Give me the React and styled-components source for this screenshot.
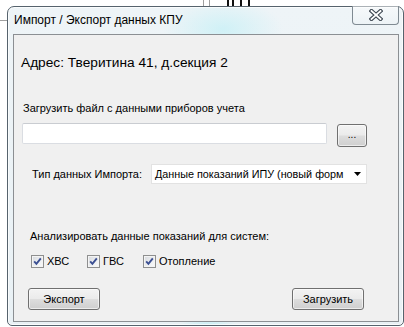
import React from "react";
import styled, { createGlobalStyle } from "styled-components";

const GlobalStyle = createGlobalStyle`
  html, body {
    margin: 0;
    padding: 0;
    background: #ffffff;
    overflow: hidden;
  }
`;

const Desktop = styled.div`
  position: relative;
  width: 404px;
  height: 327px;
  padding: 6px 0 0 7px;
  box-sizing: border-box;
  font-family: "Liberation Sans", Arial, sans-serif;
`;

const Line = styled.div`
  position: absolute;
  background: ${(p) => p.$color || "#a0a0a0"};
  left: ${(p) => p.$x}px;
  top: ${(p) => p.$y}px;
  width: ${(p) => p.$w}px;
  height: ${(p) => p.$h}px;
`;

const Window = styled.div`
  position: relative;
  width: 397px;
  height: 320px;
  box-sizing: border-box;
  border: 1px solid #56636d;
  border-radius: 7px 7px 5px 5px;
  padding: 0 4px 3px 5px;
  display: flex;
  flex-direction: column;
  background:
    radial-gradient(ellipse 60px 30px at 215px 22px, rgba(200, 240, 246, 0.8), rgba(200, 240, 246, 0) 100%),
    radial-gradient(ellipse 30px 10px at 200px 320px, rgba(190, 238, 246, 0.9), rgba(190, 238, 246, 0) 100%),
    linear-gradient(180deg, #eef4f7 0%, #e9f1f5 100%);
  box-shadow: inset 0 0 0 1px rgba(255, 255, 255, 0.7);
`;

const TitleBar = styled.div`
  height: 27px;
  display: flex;
  align-items: flex-start;
  justify-content: space-between;
`;

const Title = styled.div`
  padding-left: 1px;
  font-size: 12px;
  line-height: 27px;
  color: #000;
`;

const CloseButton = styled.div`
  margin-top: -1px;
  width: 47px;
  height: 19px;
  box-sizing: border-box;
  border: 1px solid #7f8a92;
  border-top: none;
  border-radius: 0 0 4px 4px;
  background: linear-gradient(180deg, rgba(255, 255, 255, 0.5), rgba(236, 242, 245, 0.6));
  display: flex;
  align-items: center;
  justify-content: center;
`;

const Client = styled.div`
  flex: 1;
  border: 1px solid #8b8f93;
  background: #f0f0f0;
  padding: 0 0 0 7px;
  font-size: 11px;
  color: #000;
`;

const Address = styled.div`
  margin-top: 20px;
  font-size: 13.7px;
  line-height: 15px;
`;

const Label = styled.div`
  margin-top: ${(p) => p.$top}px;
  margin-left: ${(p) => p.$left}px;
  line-height: 13px;
`;

const FileRow = styled.div`
  margin-top: 8px;
  margin-left: 1px;
  display: flex;
  align-items: flex-start;
  height: 24px;
`;

const TextInput = styled.div`
  width: 305px;
  height: 21px;
  box-sizing: border-box;
  background: #fff;
  border: 1px solid #dadde2;
  border-top-color: #c9ccd1;
  border-radius: 2px;
`;

const Button = styled.div`
  width: ${(p) => p.$w}px;
  height: ${(p) => p.$h}px;
  box-sizing: border-box;
  border: 1px solid #707070;
  border-radius: 3px;
  background: linear-gradient(180deg, #f3f3f3 0%, #ebebeb 48%, #dddddd 52%, #cfcfcf 100%);
  box-shadow: inset 0 0 0 1px rgba(255, 255, 255, 0.6);
  display: flex;
  align-items: center;
  justify-content: center;
  font-size: 11px;
  line-height: 13px;
  color: #000;
`;

const BrowseButton = styled(Button)`
  margin-left: 10px;
  margin-top: 1px;
  align-items: flex-end;
  padding-bottom: 5px;
  font-size: 10px;
`;

const TypeRow = styled.div`
  margin-top: 17px;
  display: flex;
  align-items: center;
  height: 20px;
`;

const TypeLabel = styled.div`
  margin-left: 11px;
  width: 119px;
  line-height: 13px;
`;

const Select = styled.div`
  width: 216px;
  height: 20px;
  box-sizing: border-box;
  background: #fff;
  border: 1px solid #e2e2e2;
  display: flex;
  align-items: center;
  justify-content: space-between;
  padding: 0 5px 0 3px;
`;

const SelectText = styled.span`
  white-space: nowrap;
  font-size: 10.8px;
  line-height: 14px;
`;

const CheckRow = styled.div`
  margin-top: 12px;
  margin-left: 10px;
  display: flex;
  height: 13px;
`;

const CheckItem = styled.div`
  width: 56px;
  display: flex;
  align-items: center;
  gap: 3px;
  line-height: 13px;
  white-space: nowrap;
`;

const Box = styled.div`
  width: 13px;
  height: 13px;
  box-sizing: border-box;
  border: 1px solid #8e8f8f;
  background: linear-gradient(135deg, #d6d9de 0%, #eef0f2 60%, #fbfbfb 100%);
  box-shadow: inset 0 0 0 1px #f4f4f4;
  flex-shrink: 0;
`;

const ButtonRow = styled.div`
  margin-top: 20px;
  margin-left: 7px;
  width: 336px;
  display: flex;
  justify-content: space-between;
`;

const CheckBox = ({ label }) => (
  <CheckItem>
    <Box>
      <svg width="11" height="11" viewBox="0 0 11 11" style={{ display: "block" }}>
        <path d="M2.2 5.4 L4.4 7.8 L8.8 2.4" fill="none" stroke="#3b4f92" strokeWidth="1.9" />
      </svg>
    </Box>
    <span>{label}</span>
  </CheckItem>
);

export default function App() {
  return (
    <>
      <GlobalStyle />
      <Desktop>
        <Line $x={0} $y={20} $w={7} $h={1} />
        <Line $x={203} $y={0} $w={1} $h={6} />
        <Line $x={209} $y={0} $w={1} $h={6} />
        <Line $x={227} $y={0} $w={2} $h={6} $color="#111" />
        <Line $x={232} $y={0} $w={2} $h={6} $color="#111" />
        <Line $x={240} $y={0} $w={2} $h={6} $color="#111" />
        <Line $x={248} $y={0} $w={2} $h={6} $color="#111" />
        <Window>
          <TitleBar>
            <Title>Импорт / Экспорт данных КПУ</Title>
            <CloseButton>
              <svg width="14" height="12" viewBox="0 0 14 12">
                <path d="M2.5 2 L11.5 10 M11.5 2 L2.5 10" stroke="#3c4650" strokeWidth="4" strokeLinecap="square" />
                <path d="M2.5 2 L11.5 10 M11.5 2 L2.5 10" stroke="#ffffff" strokeWidth="1.8" strokeLinecap="square" />
              </svg>
            </CloseButton>
          </TitleBar>
          <Client>
            <Address>Адрес: Тверитина 41, д.секция 2</Address>
            <Label $top={32} $left={2}>Загрузить файл с данными приборов учета</Label>
            <FileRow>
              <TextInput />
              <BrowseButton $w={30} $h={23}>...</BrowseButton>
            </FileRow>
            <TypeRow>
              <TypeLabel>Тип данных Импорта:</TypeLabel>
              <Select>
                <SelectText>Данные показаний ИПУ (новый форм</SelectText>
                <svg width="7" height="4" viewBox="0 0 7 4">
                  <path d="M0 0 H7 L3.5 4 Z" fill="#000" />
                </svg>
              </Select>
            </TypeRow>
            <Label $top={46} $left={9}>Анализировать данные показаний для систем:</Label>
            <CheckRow>
              <CheckBox label="ХВС" />
              <CheckBox label="ГВС" />
              <CheckBox label="Отопление" />
            </CheckRow>
            <ButtonRow>
              <Button $w={72} $h={22}>Экспорт</Button>
              <Button $w={72} $h={22}>Загрузить</Button>
            </ButtonRow>
          </Client>
        </Window>
      </Desktop>
    </>
  );
}
